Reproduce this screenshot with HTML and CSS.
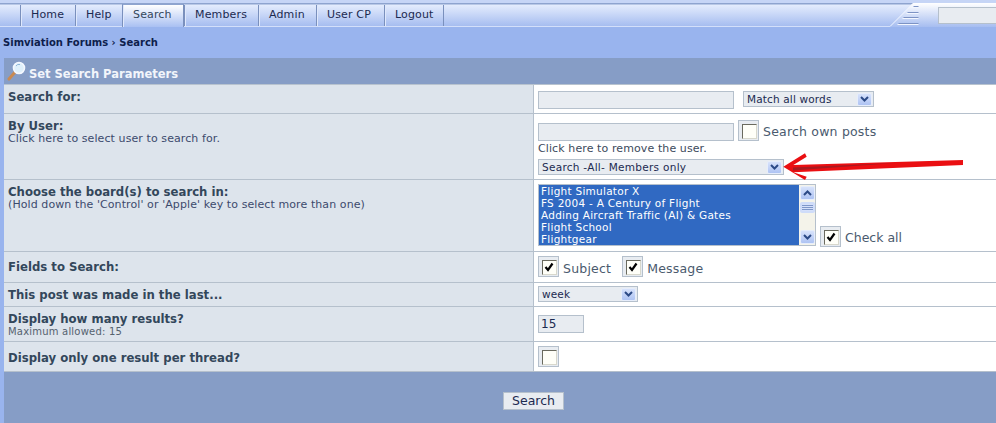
FILE: index.html
```html
<!DOCTYPE html>
<html lang="en">
<head>
<meta charset="utf-8">
<title>Search</title>
<link rel="stylesheet" href="styles.css">
</head>
<body>
<header class="topbar">
  <nav class="tabs">
    <a class="tab">Home</a><a class="tab">Help</a><a class="tab active">Search</a><a class="tab">Members</a><a class="tab">Admin</a><a class="tab">User CP</a><a class="tab">Logout</a>
  </nav>
  <div class="quick">
    <svg class="corner" width="30" height="24" viewBox="0 0 30 24"><path d="M0 23.500 L23 0.500" stroke="#f2f6ff" stroke-width="1" fill="none"/><path d="M23.500 3.500h5M17.500 9.500h11M13.500 14.500h15M8.500 20.500h20" stroke="#7d93c4" stroke-width="1" fill="none"/><path d="M21.500 4.500h7M16.500 10.500h12M12.500 15.500h16M7.500 21.500h21" stroke="#f2f6ff" stroke-width="1" fill="none"/></svg>
    <div class="quickbox"></div>
  </div>
</header>
<div class="crumbs">Simviation Forums › Search</div>
<main class="panel">
  <h1 class="title">
    <svg class="glass" width="20" height="20" viewBox="0 0 20 20"><path d="M2 18 L9 10" stroke="#c98a52" stroke-width="3" stroke-linecap="round"/><circle cx="12" cy="7" r="5.500" fill="#dff0fb" stroke="#f4f8ff" stroke-width="1.600"/><path d="M9 5a3.500 3.500 0 0 1 4-1.500" stroke="#8fb6d8" fill="none"/></svg>
    Set Search Parameters
  </h1>
  <section class="row r1">
    <div class="lab"><b>Search for:</b></div>
    <div class="val inline">
      <span class="input wide"></span>
      <span class="select s-match">Match all words<i class="arrow"><svg width="9" height="6" viewBox="0 0 9 6"><path d="M1 1l3.500 3.500L8 1" stroke="#2c4a86" stroke-width="2" fill="none"/></svg></i></span>
    </div>
  </section>
  <section class="row r2">
    <div class="lab"><b>By User:</b><small>Click here to select user to search for.</small></div>
    <div class="val">
      <div class="line2"><span class="input wide"></span><span class="check"></span><span class="clabel">Search own posts</span></div>
      <div class="remove">Click here to remove the user.</div>
      <span class="select s-members">Search -All- Members only<i class="arrow"><svg width="9" height="6" viewBox="0 0 9 6"><path d="M1 1l3.500 3.500L8 1" stroke="#2c4a86" stroke-width="2" fill="none"/></svg></i></span>
    </div>
  </section>
  <section class="row r3">
    <div class="lab"><b>Choose the board(s) to search in:</b><small>(Hold down the 'Control' or 'Apple' key to select more than one)</small></div>
    <div class="val boards">
      <div class="listbox">
        <ul class="options"><li>Flight Simulator X</li><li>FS 2004 - A Century of Flight</li><li>Adding Aircraft Traffic (AI) &amp; Gates</li><li>Flight School</li><li>Flightgear</li></ul>
        <div class="scroll">
          <i class="sbtn"><svg width="9" height="6" viewBox="0 0 9 6"><path d="M1 5l3.500-3.500L8 5" stroke="#2c4a86" stroke-width="2" fill="none"/></svg></i>
          <i class="thumb"></i>
          <i class="sbtn end"><svg width="9" height="6" viewBox="0 0 9 6"><path d="M1 1l3.500 3.500L8 1" stroke="#2c4a86" stroke-width="2" fill="none"/></svg></i>
        </div>
      </div>
      <span class="check on"><svg viewBox="0 0 10 10" width="10" height="10"><path d="M1.500 5l2.500 3L8.500 1.500" stroke="#000" stroke-width="2.200" fill="none"/></svg></span><span class="clabel short">Check all</span>
    </div>
  </section>
  <section class="row r4">
    <div class="lab"><b>Fields to Search:</b></div>
    <div class="val inline">
      <span class="check on"><svg viewBox="0 0 10 10" width="10" height="10"><path d="M1.500 5l2.500 3L8.500 1.500" stroke="#000" stroke-width="2.200" fill="none"/></svg></span><span class="clabel gap">Subject</span>
      <span class="check on"><svg viewBox="0 0 10 10" width="10" height="10"><path d="M1.500 5l2.500 3L8.500 1.500" stroke="#000" stroke-width="2.200" fill="none"/></svg></span><span class="clabel">Message</span>
    </div>
  </section>
  <section class="row r5">
    <div class="lab"><b>This post was made in the last...</b></div>
    <div class="val inline"><span class="select s-week">week<i class="arrow"><svg width="9" height="6" viewBox="0 0 9 6"><path d="M1 1l3.500 3.500L8 1" stroke="#2c4a86" stroke-width="2" fill="none"/></svg></i></span></div>
  </section>
  <section class="row r6">
    <div class="lab"><b>Display how many results?</b><small class="grey">Maximum allowed: 15</small></div>
    <div class="val inline"><span class="input num">15</span></div>
  </section>
  <section class="row r7">
    <div class="lab"><b>Display only one result per thread?</b></div>
    <div class="val inline"><span class="check"></span></div>
  </section>
  <footer class="foot"><button class="go" type="button">Search</button></footer>
</main>
<svg class="redarrow" width="186" height="40" viewBox="0 0 186 40"><path d="M183 13 L13.300 18 L26.700 9.700 L25 6.300 L3.300 19.700 L25 33 L26.700 29.700 L13.300 25.300 L183 18Z" fill="#ea0f12"/><path d="M13 20.500 L115 16 L13 23.500Z" fill="#a81a20"/></svg>
</body>
</html>
```
FILE: styles.css
```css
* { box-sizing: border-box; }
html, body { margin: 0; height: 423px; overflow: hidden; }
body {
  position: relative;
  background: #99b4ee;
  font-family: "DejaVu Sans", Verdana, sans-serif;
  color: #33475b;
}
.topbar {
  height: 27px;
  display: flex;
  justify-content: space-between;
  background: linear-gradient(#c6d5f6 0 3px, #8ea4cf 3px 4px, #e4ecfd 5px, #a6bdf0 26px);
}
.tabs {
  display: grid;
  grid-template-columns: 55px 47px 62px 74px 58px 68px 60px;
  justify-content: start;
  align-items: start;
  padding: 5px 0 0 20px;
  flex: 1;
  border-bottom: 1px solid #d3dffa;
  height: 27px;
}
.tab {
  font-size: 11px;
  line-height: 19px;
  height: 21px;
  padding-left: 10px;
  color: #1c2a50;
  letter-spacing: .15px;
  white-space: nowrap;
  border-left: 1px solid #7a90bd;
  box-shadow: inset 1px 0 0 #dfe8fc;
}
.tab:last-child { border-right: 1px solid #7a90bd; }
.tab.active {
  margin-top: -1px;
  height: 23px;
  line-height: 20px;
  background: linear-gradient(#fff, #a9c0f2);
  border-top: 1px solid #8ea4cf;
  border-right: 1px solid #7a90bd;
  color: #33475b;
}
.quick {
  width: 106px;
  flex: none;
  margin-top: 3px;
  height: 24px;
  display: flex;
  align-items: flex-start;
  position: relative;
}
.quick::before {
  content: "";
  position: absolute;
  inset: 0;
  background: linear-gradient(#fff, #a6bdf0);
  clip-path: polygon(23px 0, 100% 0, 100% 100%, 0 100%);
}
.corner { flex: none; position: relative; }
.quickbox {
  position: relative;
  margin: 4px 0 0 18px;
  flex: 1;
  height: 17px;
  background: #e8ecf1;
  border: 1px solid #b5c0cc;
  border-right: 0;
}
.crumbs {
  height: 31px;
  padding: 10px 0 0 3px;
  font-size: 10px;
  font-weight: bold;
  line-height: 12px;
  color: #0e1e4c;
}
.panel { margin-left: 4px; }
.title {
  margin: 0;
  height: 27px;
  background: #869dc6;
  color: #f2f5fb;
  font-size: 11.500px;
  font-weight: bold;
  line-height: 14px;
  padding: 9px 0 0 25px;
  position: relative;
  border-bottom: 1px solid #b8c3cf;
}
.glass { position: absolute; left: 3px; top: 3px; }
.row {
  display: grid;
  grid-template-columns: 530px 1fr;
  border-bottom: 1px solid #b5c0cc;
}
.lab {
  background: #dde4ec;
  border-right: 1px solid #b5c0cc;
  padding: 5px 0 0 4px;
  font-size: 11.700px;
  line-height: 14px;
}
.lab b, .lab small { display: block; }
.lab small { font-size: 11px; line-height: 12px; color: #3c4a6c; letter-spacing: .09px; }
.lab small.grey { color: #55626f; font-size: 10px; letter-spacing: .2px; }
.val { background: #fff; padding: 4px 0 0 4px; font-size: 11px; }
.inline { display: flex; align-items: flex-start; }
.r1 { height: 29px; }
.r1 .val { padding-top: 6px; }
.r2 { height: 66px; }
.r2 .val { padding-top: 6px; }
.r3 { height: 72px; }
.r4 { height: 31px; }
.r4 .lab { padding-top: 8px; }
.r5 { height: 24px; }
.r5 .val { padding-top: 3px; }
.r6 { height: 35px; }
.r6 .val { padding-top: 8px; }
.r7 { height: 30px; }
.r7 .lab { padding-top: 9px; }
.input {
  display: block;
  background: #e8ecf1;
  border: 1px solid #b5c0cc;
  color: #1c2a50;
}
.wide { width: 196px; height: 18px; }
.num { width: 46px; height: 18px; font-size: 12px; line-height: 16px; padding-left: 2px; }
.select {
  display: flex;
  align-items: center;
  justify-content: space-between;
  background: #e8ecf1;
  border: 1px solid #b5c0cc;
  height: 16px;
  padding: 0 1px 0 3px;
  font-size: 10.500px;
  color: #1c2a50;
  letter-spacing: .15px;
}
.s-match { width: 131px; margin-left: 9px; }
.s-members { width: 246px; margin-top: 4px; letter-spacing: .28px; }
.s-week { width: 100px; }
.arrow, .sbtn {
  display: flex;
  align-items: center;
  justify-content: center;
  width: 15px;
  height: 13px;
  background: linear-gradient(#d7e2fb, #aec3f3);
  border: 1px solid #e6edfb;
  border-radius: 2px;
}
.line2 { display: flex; align-items: flex-end; height: 21px; }
.check {
  flex: none;
  width: 21px;
  height: 21px;
  background: #e8ecf1;
  border: 1px solid #b5c0cc;
  display: block;
  position: relative;
}
.check::before {
  content: "";
  position: absolute;
  left: 3px;
  top: 3px;
  width: 13px;
  height: 13px;
  background: #fffff8;
  border: 1px solid;
  border-color: #6a6a5e #d8d8cc #d8d8cc #6a6a5e;
}
.check svg { position: absolute; left: 5px; top: 5px; }
.line2 .check { margin-left: 4px; }
.clabel {
  font-size: 12.500px;
  line-height: 18px;
  color: #4a5a6e;
  margin-left: 4px;
  letter-spacing: .2px;
}
.r4 .clabel { line-height: 26px; }
.clabel.gap { margin-right: 11px; }
.clabel.short { letter-spacing: 0; }
.remove {
  font-size: 11px;
  line-height: 12px;
  margin-top: 2px;
  color: #3c4a5c;
  letter-spacing: .1px;
}
.boards { display: flex; align-items: flex-end; padding-bottom: 4px; }
.listbox {
  align-self: flex-start;
  width: 278px;
  height: 62px;
  display: flex;
  border: 1px solid #b5c0cc;
  background: #3069c2;
}
.options {
  list-style: none;
  flex: 1;
  margin: 0;
  padding: 0 0 0 2px;
  color: #fff;
  font-size: 10.500px;
  line-height: 12px;
  letter-spacing: .26px;
  overflow: hidden;
}
.scroll {
  width: 16px;
  flex: none;
  background: #f4f3ea;
  display: flex;
  flex-direction: column;
  align-items: center;
  padding-top: 1px;
}
.sbtn { height: 14px; }
.sbtn.end { margin-top: auto; margin-bottom: 1px; }
.thumb {
  width: 15px;
  height: 11px;
  margin-top: 2px;
  background: repeating-linear-gradient(#d5e0fa 0 1px, #7f97c9 1px 2px);
  border: 2px solid #cfdcf9;
  border-radius: 2px;
}
.boards .check { margin-left: 4px; }
.foot {
  height: 51px;
  background: #869dc6;
  padding: 20px 0 0 499px;
}
.go {
  display: block;
  width: 61px;
  height: 18px;
  background: #e8ecf1;
  border: 1px solid #b5c0cc;
  font: 12.500px "DejaVu Sans", sans-serif;
  line-height: 14px;
  padding: 0;
  color: #1c2a50;
}
.redarrow { position: absolute; left: 780px; top: 147px; }
```
